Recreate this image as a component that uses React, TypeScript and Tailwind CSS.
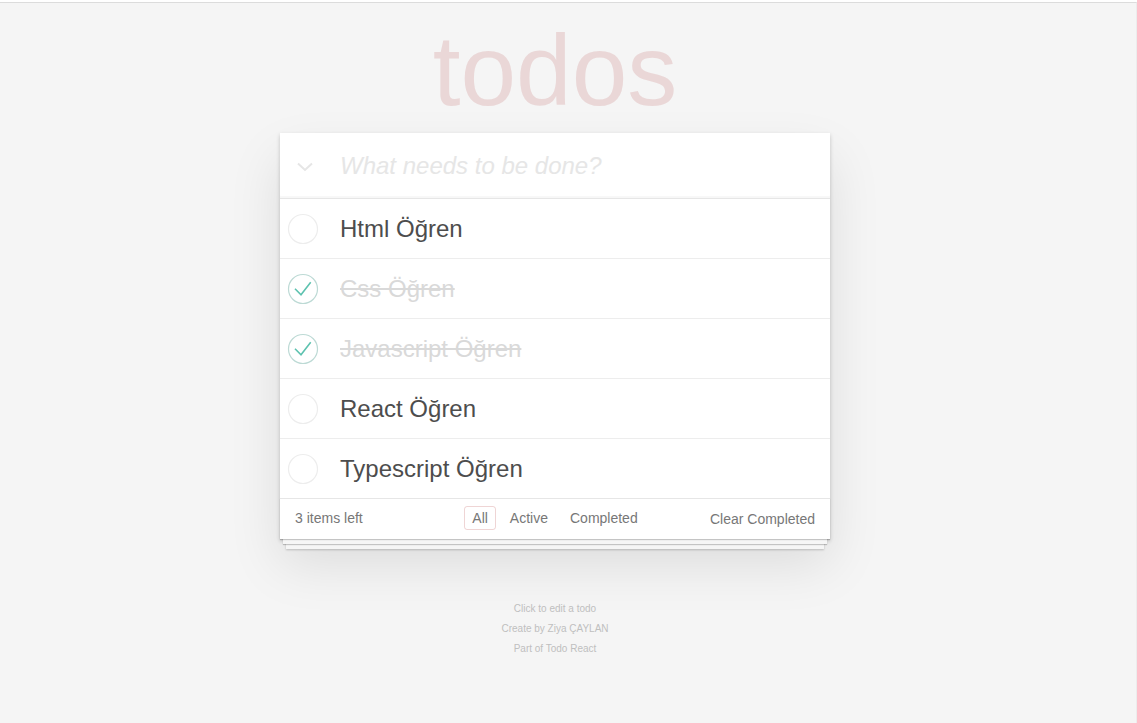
import { useState } from 'react';

type Todo = { id: number; title: string; done: boolean };

const initialTodos: Todo[] = [
  { id: 1, title: 'Html Öğren', done: false },
  { id: 2, title: 'Css Öğren', done: true },
  { id: 3, title: 'Javascript Öğren', done: true },
  { id: 4, title: 'React Öğren', done: false },
  { id: 5, title: 'Typescript Öğren', done: false },
];

function Toggle({ done }: { done: boolean }) {
  return (
    <svg width="32" height="32" viewBox="0 0 32 32" className="shrink-0">
      <circle cx="16" cy="16" r="14.5" fill="none" stroke={done ? '#bddad5' : '#ededed'} strokeWidth="1.2" />
      {done && (
        <polyline points="8,15.8 14,21.8 23.7,9.2" fill="none" stroke="#5dc2af" strokeWidth="1.6" />
      )}
    </svg>
  );
}

export default function App() {
  const [todos, setTodos] = useState<Todo[]>(initialTodos);
  const [filter, setFilter] = useState('All');
  const left = todos.filter((t) => !t.done).length;

  return (
    <div className="min-h-[723px] bg-[#f5f5f5] font-['Liberation_Sans',Arial,sans-serif]">
      <div className="mt-[2px] min-h-[721px] border-t border-r border-[#dcdcdc] border-r-[#ececec] pr-[26px] flex flex-col items-center">
        <h1 className="mt-[17px] h-[100px] text-[100px] leading-[100px] font-thin text-[rgba(175,47,47,0.15)] text-center">
          todos
        </h1>

        <section className="mt-[13px] w-[550px] bg-white shadow-[0_2px_4px_0_rgba(0,0,0,0.2),0_25px_50px_0_rgba(0,0,0,0.1)]">
          {/* Header */}
          <div className="h-[65px] flex items-center shadow-[inset_0_-2px_1px_rgba(0,0,0,0.03)]">
            <div className="w-[60px] flex justify-start pl-[17px] pt-[3px]">
              <svg width="16" height="10" viewBox="0 0 16 10">
                <polyline points="1,1.5 8,8 15,1.5" fill="none" stroke="#e6e6e6" strokeWidth="2" />
              </svg>
            </div>
            <input
              className="flex-1 h-full pr-4 text-[24px] italic text-[#4d4d4d] placeholder:text-[#e6e6e6] outline-none bg-transparent"
              placeholder="What needs to be done?"
            />
          </div>

          {/* List */}
          <ul className="border-t border-[#e6e6e6]">
            {todos.map((t) => (
              <li key={t.id} className="h-[60px] flex items-center border-b border-[#ededed] last:h-[59px] last:border-b-0">
                <button
                  className="w-[60px] pl-[7px] flex items-center"
                  onClick={() => setTodos(todos.map((x) => (x.id === t.id ? { ...x, done: !x.done } : x)))}
                >
                  <Toggle done={t.done} />
                </button>
                <span
                  className={
                    t.done
                      ? 'text-[24px] leading-[29px] text-[#d9d9d9] line-through'
                      : 'text-[24px] leading-[29px] text-[#4d4d4d]'
                  }
                >
                  {t.title}
                </span>
              </li>
            ))}
          </ul>

          {/* Footer */}
          <div className="h-[41px] border-t border-[#e6e6e6] px-[15px] pb-[2px] grid grid-cols-[1fr_auto_1fr] items-center text-[14px] text-[#777] bg-white shadow-[0_1px_1px_rgba(0,0,0,0.2),0_8px_0_-3px_#f6f6f6,0_9px_1px_-3px_rgba(0,0,0,0.2),0_16px_0_-6px_#f6f6f6,0_17px_2px_-6px_rgba(0,0,0,0.2)]">
            <span>{left} items left</span>
            <div className="flex items-center">
              {['All', 'Active', 'Completed'].map((f) => (
                <button
                  key={f}
                  onClick={() => setFilter(f)}
                  className={
                    filter === f
                      ? 'mx-[3px] px-[7px] py-[3px] leading-[16px] rounded-[3px] border border-[rgba(175,47,47,0.2)]'
                      : 'mx-[3px] px-[7px] py-[3px] leading-[16px] rounded-[3px] border border-transparent'
                  }
                >
                  {f}
                </button>
              ))}
            </div>
            <button className="justify-self-end leading-[20px] pt-[1px]">Clear Completed</button>
          </div>
        </section>

        <footer className="mt-[60px] text-center text-[10px] leading-[20px] text-[#bfbfbf]">
          <p>Click to edit a todo</p>
          <p>Create by Ziya ÇAYLAN</p>
          <p>Part of Todo React</p>
        </footer>
      </div>
    </div>
  );
}
